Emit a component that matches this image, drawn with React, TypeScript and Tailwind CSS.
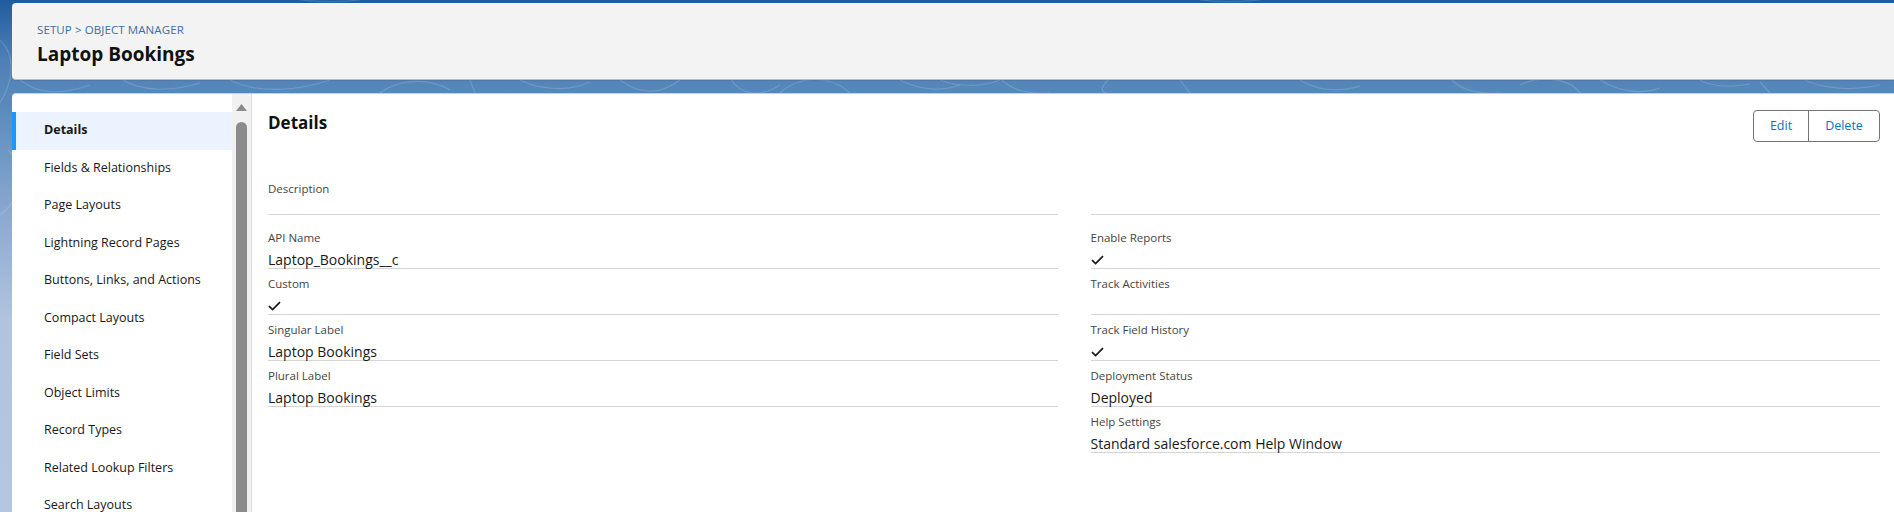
import React from 'react'

const navItems = [
  'Details',
  'Fields & Relationships',
  'Page Layouts',
  'Lightning Record Pages',
  'Buttons, Links, and Actions',
  'Compact Layouts',
  'Field Sets',
  'Object Limits',
  'Record Types',
  'Related Lookup Filters',
  'Search Layouts',
]

const Check = () => (
  <svg width="13" height="10" viewBox="0 0 13 10" fill="none">
    <path d="M1 5.2 L4.6 8.6 L12 1.2" stroke="#181818" strokeWidth="1.7" />
  </svg>
)

type Row = { label: string; value?: React.ReactNode }

const Field = ({ label, value }: Row) => (
  <div className="h-[46px] border-b border-[#d4d4d4] pt-[7px]">
    <div className="text-[11.5px] leading-[16px] text-[#444444]">{label}</div>
    <div className="mt-[5px] h-[17px] flex items-center text-[14px] leading-[17px] text-[#181818]">{value}</div>
  </div>
)

const leftRows: Row[] = [
  { label: 'API Name', value: 'Laptop_Bookings__c' },
  { label: 'Custom', value: <Check /> },
  { label: 'Singular Label', value: 'Laptop Bookings' },
  { label: 'Plural Label', value: 'Laptop Bookings' },
]

const rightRows: Row[] = [
  { label: 'Enable Reports', value: <Check /> },
  { label: 'Track Activities' },
  { label: 'Track Field History', value: <Check /> },
  { label: 'Deployment Status', value: 'Deployed' },
  { label: 'Help Settings', value: 'Standard salesforce.com Help Window' },
]

const Swirls = () => (
  <svg className="absolute inset-0 w-full h-full" viewBox="0 0 1894 512" preserveAspectRatio="none" fill="none">
    <g stroke="#ffffff" strokeOpacity="0.16" strokeWidth="1.2">
      <path d="M0 40 C 20 60, 10 90, -5 110" />
      <path d="M8 150 C 30 170, 20 200, 0 215" />
      <path d="M620 80 C 640 95, 660 95, 680 80" />
      <path d="M730 78 C 740 95, 760 98, 780 85" />
      <path d="M780 93 C 800 75, 830 75, 850 93" />
      <path d="M900 80 C 920 90, 940 92, 960 85" />
      <path d="M940 80 C 955 86, 980 88, 1000 80" />
      <path d="M1000 78 C 1010 90, 1030 95, 1050 93" />
      <path d="M1110 78 C 1100 88, 1100 92, 1108 93" />
      <path d="M1180 80 L 1190 93" />
      <path d="M1300 80 C 1320 92, 1340 92, 1360 86" />
      <path d="M1450 78 C 1460 90, 1480 95, 1500 93" />
      <path d="M1520 85 C 1540 75, 1570 78, 1580 93" />
      <path d="M1600 80 C 1620 92, 1640 95, 1660 88" />
      <path d="M1700 80 C 1710 86, 1730 88, 1750 84" />
      <path d="M1760 82 L 1770 93" />
      <path d="M1800 78 C 1820 88, 1850 92, 1880 85" />
      <path d="M20 80 C 40 95, 60 95, 90 85" />
      <path d="M120 78 C 140 92, 170 92, 200 83" />
      <path d="M230 80 C 260 95, 300 90, 330 80" />
      <path d="M380 93 C 400 78, 430 78, 450 90" />
      <path d="M470 80 L 475 93" />
      <path d="M520 80 C 540 90, 570 92, 590 82" />
      <path d="M300 0 C 320 2, 340 2, 360 0" />
      <path d="M1200 0 C 1220 2, 1240 2, 1260 0" />
    </g>
  </svg>
)

export default function App() {
  return (
    <div
      className="relative w-full h-[512px] overflow-hidden bg-[linear-gradient(180deg,#1f5c9e_0px,#4f80b6_60px,#5b8bbd_110px,#8eaad0_220px,#b0c4df_320px,#b4c7e0_512px)]"
      style={{ fontFamily: '"Open Sans", "Noto Sans", "Liberation Sans", sans-serif' }}
    >
      <Swirls />
      <div className="relative flex flex-col h-full pl-[12px] pt-[3px]">
        <header className="h-[77px] shrink-0 bg-[#f3f3f3] rounded-l-[4px] border-b border-[#bdbdbd] shadow-[0_1px_1px_rgba(0,0,0,0.08)] pl-[25px] pt-[19px]">
          <div className="text-[11.5px] leading-[16px] text-[#3b6ea5] tracking-[0.1px]">SETUP &gt; OBJECT MANAGER</div>
          <h1 className="mt-[4px] text-[19px] leading-[24px] font-bold text-[#111111]">Laptop Bookings</h1>
        </header>

        <div className="mt-[13px] flex-1 flex bg-white rounded-tl-[4px] border-t border-[#d0d0d0] min-h-0">
          <nav className="w-[220px] shrink-0 pt-[18px]">
            {navItems.map((item, i) => (
              <div
                key={item}
                className={
                  i === 0
                    ? 'h-[37.5px] flex items-center pl-[28px] border-l-[4px] border-[#1b96ff] bg-[#eaf3fe] text-[12.5px] font-bold text-[#181818]'
                    : 'h-[37.5px] flex items-center pl-[32px] text-[12.5px] text-[#181818]'
                }
              >
                {item}
              </div>
            ))}
          </nav>

          <div className="w-[19px] shrink-0 bg-[#f1f1f1] flex flex-col items-center pt-[10px]">
            <svg width="11" height="7" viewBox="0 0 11 7">
              <path d="M0 7 L5.5 0 L11 7 Z" fill="#8a8a8a" />
            </svg>
            <div className="mt-[11px] w-[11px] flex-1 bg-[#8b8b8b] rounded-t-[6px]" />
          </div>

          <main className="flex-1 border-l border-[#dcdcdc] pl-[16px] pr-[14px] min-w-0">
            <div className="flex items-start justify-between pt-[16px]">
              <h2 className="mt-[1px] text-[17px] leading-[24px] font-bold text-[#111111]">Details</h2>
              <div className="flex h-[32px] border border-[#747474] rounded-[4px] overflow-hidden bg-white text-[12.5px] text-[#0176d3]">
                <button className="w-[55px] flex items-center justify-center border-r border-[#747474]">Edit</button>
                <button className="w-[70px] flex items-center justify-center">Delete</button>
              </div>
            </div>

            <div className="mt-[27px] grid grid-cols-2 gap-x-[33px]">
              <div>
                <div className="h-[46px] border-b border-[#d4d4d4] pt-[12px]">
                  <div className="text-[11.5px] leading-[16px] text-[#444444]">Description</div>
                </div>
                <div className="mt-[8px]">
                  {leftRows.map((r) => (
                    <Field key={r.label} {...r} />
                  ))}
                </div>
              </div>
              <div>
                <div className="h-[46px] border-b border-[#d4d4d4]" />
                <div className="mt-[8px]">
                  {rightRows.map((r) => (
                    <Field key={r.label} {...r} />
                  ))}
                </div>
              </div>
            </div>
          </main>
        </div>
      </div>
    </div>
  )
}
